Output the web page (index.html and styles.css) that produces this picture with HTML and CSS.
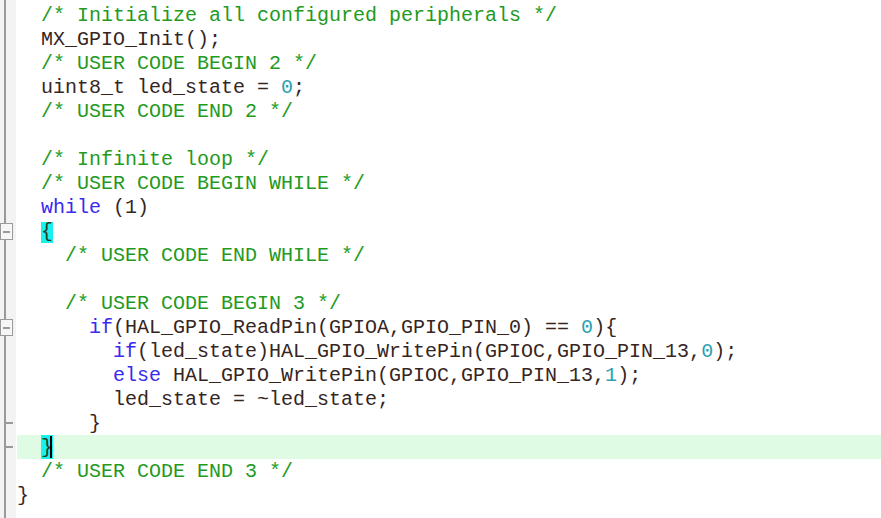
FILE: index.html
```html
<!DOCTYPE html>
<html>
<head>
<meta charset="utf-8">
<link rel="stylesheet" href="styles.css">
</head>
<body>
<div class="editor">
  <div class="line"><div class="gut"></div><div class="code">  <span class="c">/* Initialize all configured peripherals */</span></div></div>
  <div class="line"><div class="gut"></div><div class="code">  MX_GPIO_Init();</div></div>
  <div class="line"><div class="gut"></div><div class="code">  <span class="c">/* USER CODE BEGIN 2 */</span></div></div>
  <div class="line"><div class="gut"></div><div class="code">  uint8_t led_state = <span class="n">0</span>;</div></div>
  <div class="line"><div class="gut"></div><div class="code">  <span class="c">/* USER CODE END 2 */</span></div></div>
  <div class="line"><div class="gut"></div><div class="code"> </div></div>
  <div class="line"><div class="gut"></div><div class="code">  <span class="c">/* Infinite loop */</span></div></div>
  <div class="line"><div class="gut"></div><div class="code">  <span class="c">/* USER CODE BEGIN WHILE */</span></div></div>
  <div class="line"><div class="gut"></div><div class="code">  <span class="k">while</span> (1)</div></div>
  <div class="line"><div class="gut"><span class="fold"></span></div><div class="code">  <span class="brace brace-top">{</span></div></div>
  <div class="line"><div class="gut"></div><div class="code">    <span class="c">/* USER CODE END WHILE */</span></div></div>
  <div class="line"><div class="gut"></div><div class="code"> </div></div>
  <div class="line"><div class="gut"></div><div class="code">    <span class="c">/* USER CODE BEGIN 3 */</span></div></div>
  <div class="line"><div class="gut"><span class="fold"></span></div><div class="code">      <span class="k">if</span>(HAL_GPIO_ReadPin(GPIOA,GPIO_PIN_0) == <span class="n">0</span>){</div></div>
  <div class="line"><div class="gut"></div><div class="code">        <span class="k">if</span>(led_state)HAL_GPIO_WritePin(GPIOC,GPIO_PIN_13,<span class="n">0</span>);</div></div>
  <div class="line"><div class="gut"></div><div class="code">        <span class="k">else</span> HAL_GPIO_WritePin(GPIOC,GPIO_PIN_13,<span class="n">1</span>);</div></div>
  <div class="line"><div class="gut"></div><div class="code">        led_state = ~led_state;</div></div>
  <div class="line"><div class="gut"><span class="tick"></span></div><div class="code">      }</div></div>
  <div class="line"><div class="gut"><span class="tick"></span></div><div class="code current">  <span class="brace cursor">}</span></div></div>
  <div class="line"><div class="gut"></div><div class="code">  <span class="c">/* USER CODE END 3 */</span></div></div>
  <div class="line"><div class="gut"></div><div class="code">}</div></div>
  <div class="line"><div class="gut"></div><div class="code"> </div></div>
</div>
</body>
</html>
```
FILE: styles.css
```css
html, body {
  margin: 0;
  padding: 0;
  background: #ffffff;
  height: 100%;
  overflow: hidden;
}

.editor {
  display: flex;
  flex-direction: column;
  padding-top: 3px;
  font-family: "Liberation Mono", "Courier New", monospace;
  font-size: 20px;
  color: #36261f;
  height: 100%;
  background: linear-gradient(to right, #f3f3f3 0, #f3f3f3 4px, #9a9a9a 4px, #9a9a9a 6px, #f3f3f3 6px, #f3f3f3 16px, #ffffff 16px);
}

.line {
  display: flex;
  height: 24px;
}

.gut {
  position: relative;
  width: 17px;
  flex: none;
}

.code {
  flex: 1;
  white-space: pre;
  line-height: 24px;
  height: 23px;
  padding-top: 1px;
}

.code.current {
  background: #dffbe4;
}

.c { color: #239a22; }
.k { color: #3a2af0; }
.n { color: #2aa0b0; }

.brace {
  display: inline-block;
  background: #19f0f0;
  height: 23px;
  margin-top: -1px;
  padding-top: 1px;
  line-height: 23px;
  vertical-align: top;
  color: #2a3a20;
  position: relative;
}

.brace-top {
  height: 21px;
  line-height: 19px;
  margin-top: 2px;
  padding-top: 0;
}

.cursor::after {
  content: "";
  position: absolute;
  right: 1px;
  top: 1px;
  width: 2px;
  height: 22px;
  background: #000000;
}

.fold {
  position: absolute;
  left: 0;
  top: 4px;
  width: 11px;
  height: 15px;
  border: 1px solid #9a9a9a;
  background: #f6f6f6;
}

.fold::after {
  content: "";
  position: absolute;
  left: 2px;
  right: 2px;
  top: 7px;
  height: 2px;
  background: #9a9a9a;
}

.tick {
  position: absolute;
  left: 5px;
  top: 11px;
  width: 8px;
  height: 2px;
  background: #9a9a9a;
}
```
